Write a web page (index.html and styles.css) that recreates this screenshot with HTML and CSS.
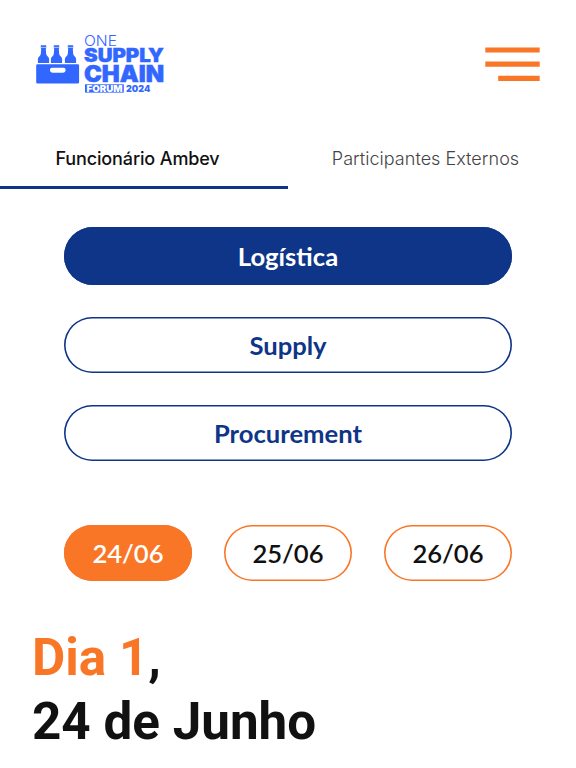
FILE: index.html
```html
<!DOCTYPE html>
<html lang="pt-BR">

<head>
    <meta charset="UTF-8">
    <meta name="viewport" content="width=device-width, initial-scale=1.0">
    <title>One Supply Chain Forum 2024</title>
    <link rel="stylesheet" href="styles.css">
</head>

<body>
    <header class="header">
        <svg class="logo" viewBox="36 34 130 62" role="img" aria-label="One Supply Chain Forum 2024">
            <!-- bottles -->
            <path d="M40.8 45.3h5.4v3l-.4.5.4 5.2q.3 1.6 2 3 .9.9.9 2.2v3.7H37.9v-3.7q0-1.3.9-2.2 1.7-1.4 2-3l.4-5.2-.4-.5z" />
            <path d="M53.8 45.3h5.4v3l-.4.5.4 5.2q.3 1.6 2 3 .9.9.9 2.2v3.7H50.9v-3.7q0-1.3.9-2.2 1.7-1.4 2-3l.4-5.2-.4-.5z" />
            <path d="M67.8 45.3h5.4v3l-.4.5.4 5.2q.3 1.6 2 3 .9.9.9 2.2v3.7H64.9v-3.7q0-1.3.9-2.2 1.7-1.4 2-3l.4-5.2-.4-.5z" />
            <path class="cap-line" d="M40.8 47.4h5.4M53.8 47.4h5.4M67.8 47.4h5.4" />
            <!-- crate -->
            <path fill-rule="evenodd" d="M37.5 64.2h40.3a1.3 1.3 0 0 1 1.3 1.3v16.8a1.3 1.3 0 0 1-1.3 1.3H37.5a1.3 1.3 0 0 1-1.3-1.3V65.5a1.3 1.3 0 0 1 1.3-1.3zM52 67.7a2 2 0 0 0-2 2v.6a2.4 2.4 0 0 0 2.4 2.4h10.8a2.4 2.4 0 0 0 2.4-2.4v-.6a2 2 0 0 0-2-2z" />
            <text class="logo-one" x="84" y="46.2" textLength="33" lengthAdjust="spacingAndGlyphs">ONE</text>
            <text class="logo-supply" x="84" y="62.3" textLength="80" lengthAdjust="spacingAndGlyphs">SUPPLY</text>
            <text class="logo-chain" x="84" y="81.8" textLength="80" lengthAdjust="spacingAndGlyphs">CHAIN</text>
            <rect x="85" y="84.3" width="38.8" height="8.3" />
            <text class="logo-small logo-forum" x="86.5" y="91.6" textLength="36" lengthAdjust="spacingAndGlyphs">FORUM</text>
            <text class="logo-small" x="126" y="91.6" textLength="24.3" lengthAdjust="spacingAndGlyphs">2024</text>
        </svg>
        <button class="menu" aria-label="Menu">
            <svg width="55" height="34" viewBox="0 0 55 34">
                <path d="M.3 .4h54.4v5.2H.3zM.3 14.5h54.4v5.2H.3zM13.2 28.8h41.5v5.2H13.2z" />
            </svg>
        </button>
    </header>

    <nav class="tabs">
        <a class="tab active"><span>Funcionário Ambev</span></a>
        <a class="tab"><span>Participantes Externos</span></a>
    </nav>

    <main>
        <div class="areas">
            <button class="area active">Logística</button>
            <button class="area">Supply</button>
            <button class="area">Procurement</button>
        </div>

        <div class="days">
            <button class="day active">24/06</button>
            <button class="day">25/06</button>
            <button class="day">26/06</button>
        </div>

        <h1 class="title"><span>Dia 1</span>,<br>24 de Junho</h1>
    </main>
</body>

</html>
```
FILE: styles.css
```css
* {
    margin: 0;
    padding: 0;
    box-sizing: border-box;
}

body {
    font-family: Lato, sans-serif;
    background-color: #fff;
    color: #111;
}

button {
    border: none;
    background: none;
    font-family: inherit;
}

.header {
    height: 130px;
    padding: 34px 36px 0;
    display: flex;
    justify-content: space-between;
    align-items: flex-start;
}

.logo {
    width: 130px;
    height: 62px;
    fill: #3166ff;
    font-family: Inter, sans-serif;
}

.cap-line {
    stroke: #fff;
    stroke-width: 0.6;
}

.logo-one {
    font-size: 14px;
    font-weight: 300;
}

.logo-supply {
    font-size: 18.4px;
    font-weight: 900;
    stroke: #3166ff;
    stroke-width: 0.4;
}

.logo-chain {
    font-size: 22.4px;
    font-weight: 900;
    stroke: #3166ff;
    stroke-width: 0.5;
}

.logo-small {
    font-size: 9px;
    font-weight: 900;
}

.logo-forum {
    fill: #fff;
}

.menu {
    margin-top: 13px;
}

.menu svg {
    display: block;
    fill: #f97627;
}

.tabs {
    height: 59px;
    display: grid;
    grid-template-columns: 1fr 1fr;
}

.tab {
    padding-right: 13px;
    display: flex;
    justify-content: center;
    align-items: center;
    border-bottom: 3.2px solid transparent;
    font-family: Inter, sans-serif;
    font-size: 18px;
    letter-spacing: 0.03px;
    font-weight: 300;
    color: #444;
    white-space: nowrap;
}

.tab.active {
    border-color: #0e3587;
    letter-spacing: -0.13px;
    font-weight: 500;
    color: #111;
}

.areas {
    padding: 38px 64px 0;
    display: flex;
    flex-direction: column;
    gap: 32px;
}

.area,
.day {
    height: 56px;
    border-radius: 29px;
    box-shadow: inset 0 0 0 1.6px #0e3587;
    font-size: 25.6px;
    font-weight: 700;
    color: #0e3587;
}

.area.active {
    height: 58px;
    background-color: #0e3587;
    color: #fff;
}

.days {
    padding: 64px 64px 0;
    display: grid;
    grid-template-columns: repeat(3, 1fr);
    gap: 32px;
}

.day {
    box-shadow: inset 0 0 0 1.6px #f97627;
    font-weight: 600;
    color: #111;
}

.day.active {
    background-color: #f97627;
    color: #fff;
}

.title {
    padding: 45px 32px 0;
    font-family: Roboto, sans-serif;
    font-size: 51.2px;
    font-weight: 700;
    line-height: 64px;
}

.title span {
    color: #f97627;
}
```
